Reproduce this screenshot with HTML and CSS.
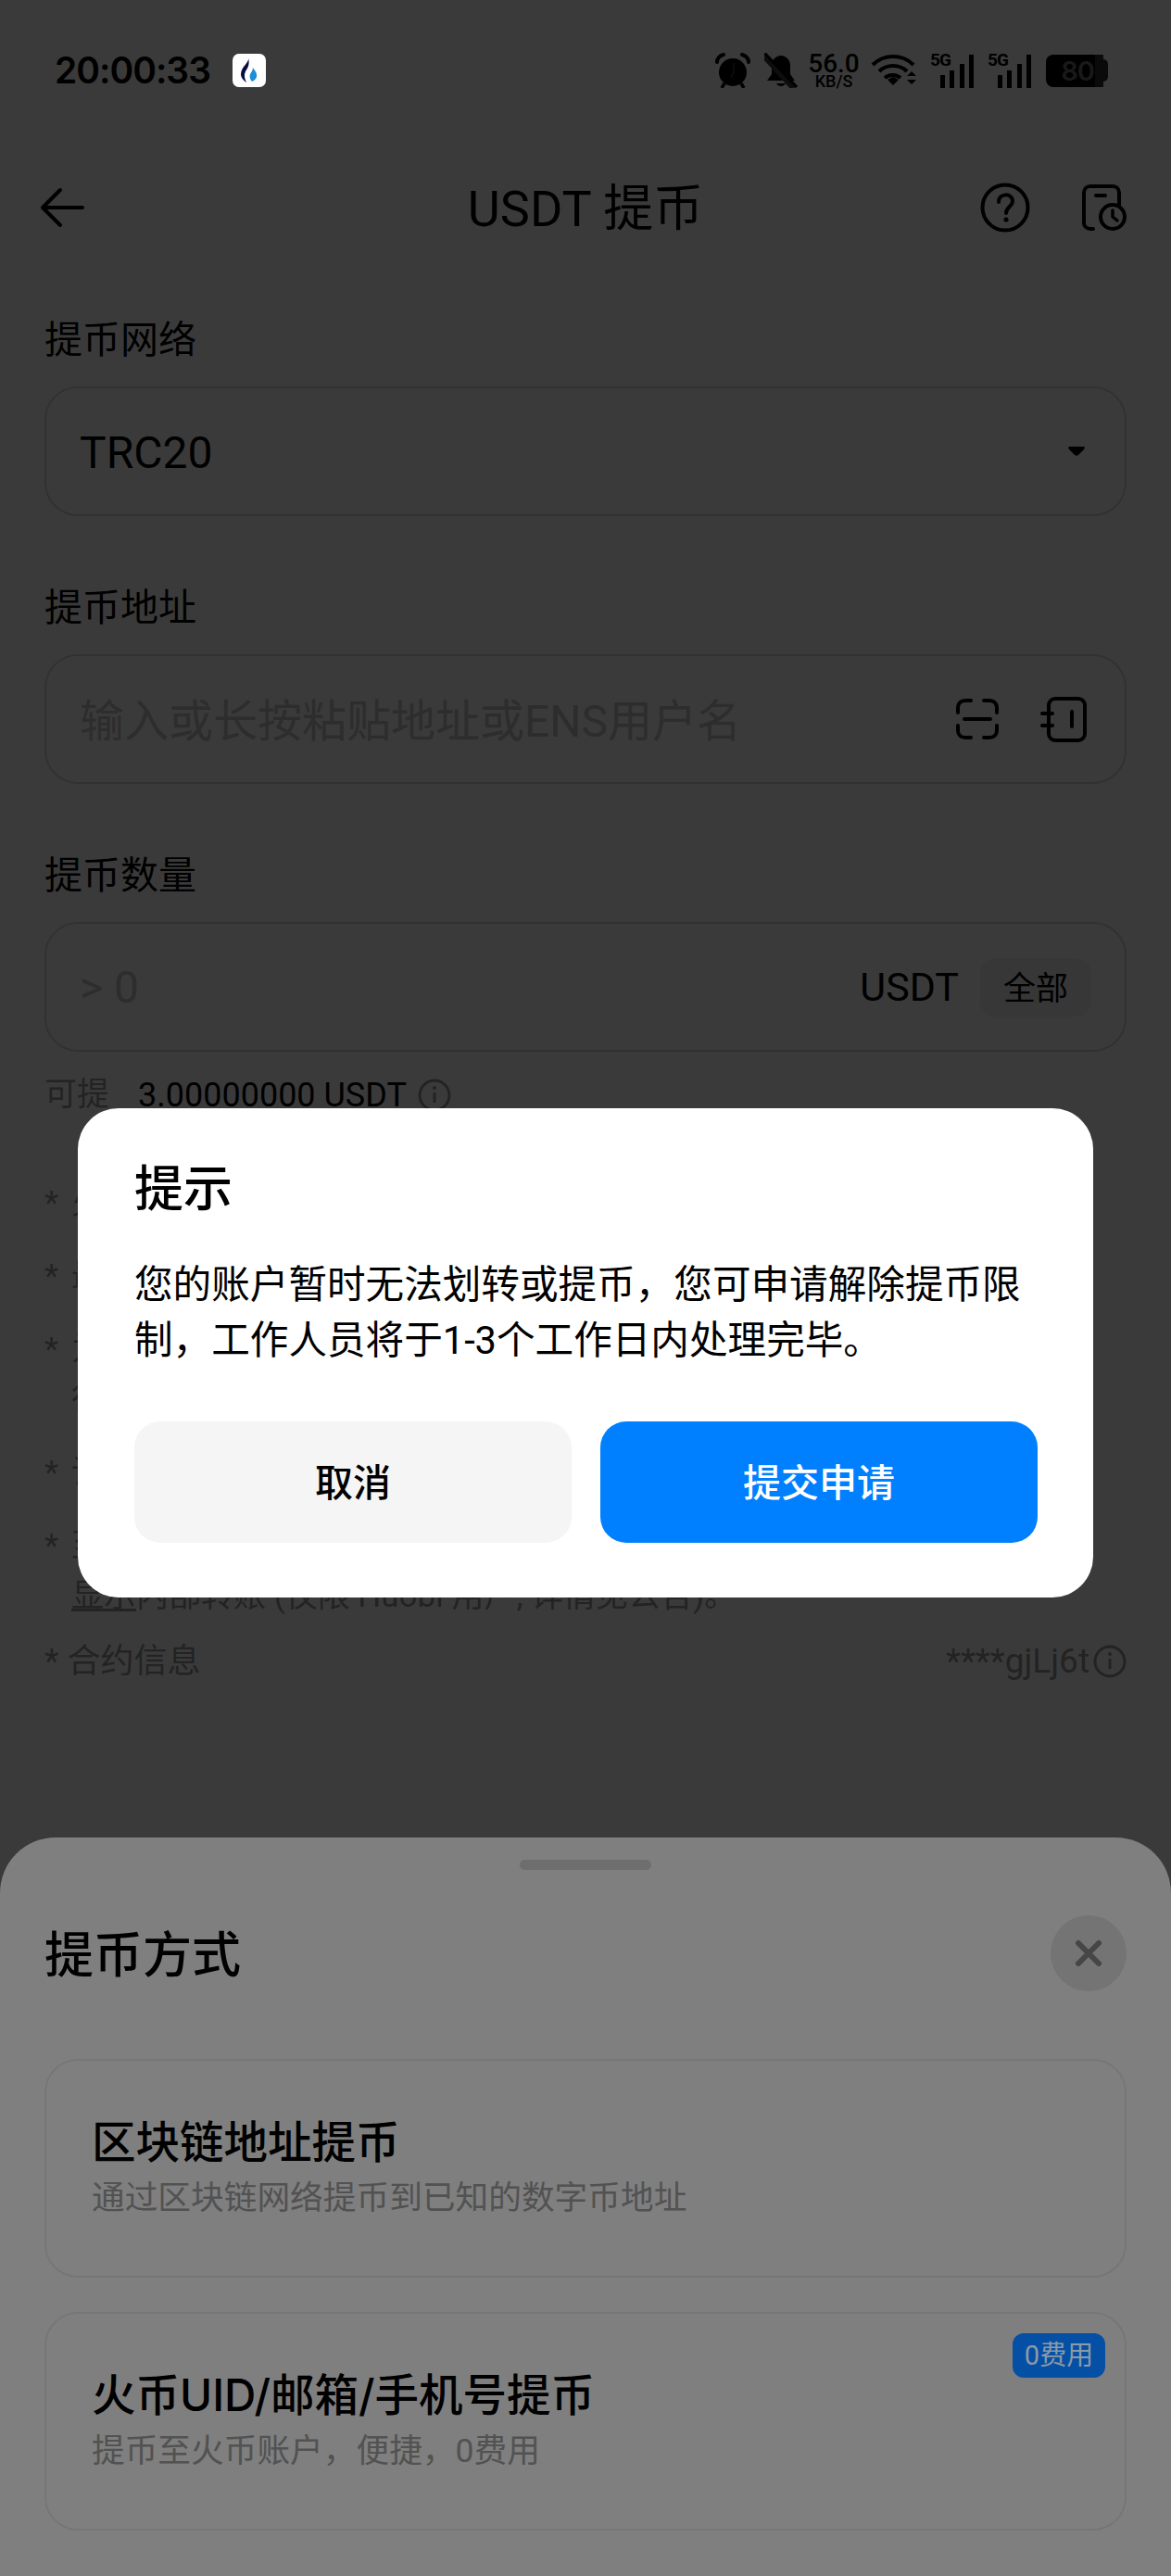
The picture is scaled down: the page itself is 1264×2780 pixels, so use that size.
FILE: index.html
```html
<!DOCTYPE html>
<html lang="zh">
<head>
  <meta charset="UTF-8">
  <meta name="viewport" content="width=device-width, initial-scale=1.0">
  <title>USDT 提币</title>
  <link rel="stylesheet" href="styles.css">
</head>
<body>

  <!-- 底层页面 -->
  <div class="page">
    <div class="status-bar">
      <div class="status-left">
        <span class="clock">20:00:33</span>
        <span class="app-badge">
          <svg width="24" height="30" viewBox="0 0 24 30">
            <path d="M11 1c2 5-8 10-8 18 0 4 3 7 6 9-2-4-3-8-1-12 2-3 5-7 3-15z" fill="#0b0b45"/>
            <path d="M16 12c2 3 5 6 4 10-1 3-3 4-5 5-2-2-3-5-2-8 1-2 3-4 3-7z" fill="#1c8fd6"/>
          </svg>
        </span>
      </div>
      <div class="status-right">
        <svg class="ic-alarm" width="38" height="38" viewBox="0 0 38 38">
          <circle cx="19" cy="21" r="15" fill="#000"/>
          <path d="M2 10c0-4 3-7 7-8M36 10c0-4-3-7-7-8" fill="none" stroke="#000" stroke-width="4" stroke-linecap="round"/>
          <path d="M10 33l-3 5M28 33l3 5" stroke="#000" stroke-width="3.5"/>
          <path d="M20 11v10l-3 6" stroke="#3b3b3b" stroke-width="1.6" fill="none"/>
        </svg>
        <svg class="ic-bell" width="36" height="38" viewBox="0 0 36 38">
          <path d="M18 3c6 0 10 5 10 11v9l5 7H3l5-7v-9C8 8 12 3 18 3z" fill="#000"/>
          <path d="M13 33c2 4 8 4 10 0z" fill="#000"/>
          <path d="M-2 1l34 37" stroke="#3b3b3b" stroke-width="7"/>
          <path d="M1 1l34 36" stroke="#000" stroke-width="3"/>
        </svg>
        <span class="net-speed"><b>56.0</b><i>KB/S</i></span>
        <svg class="ic-wifi" width="50" height="38" viewBox="0 0 50 38">
          <path d="M2 13c12-12 32-12 44 0M9 20c8-8 22-8 30 0M15 27c5-4 12-4 17 0" fill="none" stroke="#000" stroke-width="4"/>
          <path d="M18 29l6-3 6 3-6 6z" fill="#000"/>
          <path d="M39 25l5-5 5 5zM39 29l5 5 5-5z" fill="#000"/>
        </svg>
        <span class="signal"><em>5G</em><i class="b1"></i><i class="b2"></i><i class="b3"></i><i class="b4"></i></span>
        <span class="signal"><em>5G</em><i class="b1"></i><i class="b2"></i><i class="b3"></i><i class="b4"></i></span>
        <span class="battery"><span class="battery-fill">80</span><span class="battery-rest"></span><span class="battery-nub"></span></span>
      </div>
    </div>

    <div class="nav">
      <svg width="50" height="44" viewBox="0 0 50 44">
        <path d="M47 22H4M23 3L4 22l19 19" fill="none" stroke="#000" stroke-width="4" stroke-linecap="round" stroke-linejoin="round"/>
      </svg>
      <h1>USDT 提币</h1>
      <div class="nav-actions">
        <svg width="54" height="54" viewBox="0 0 54 54">
          <circle cx="27" cy="27" r="24.5" fill="none" stroke="#000" stroke-width="4"/>
          <path d="M20 21c0-10 15-10 15-1 0 6-7 6-7 13" fill="none" stroke="#000" stroke-width="4" stroke-linecap="round"/>
          <circle cx="28" cy="40" r="2.6" fill="#000"/>
        </svg>
        <svg width="48" height="50" viewBox="0 0 48 50">
          <path d="M12 48H9c-4 0-7-3-7-6V9c0-4 3-7 7-7h24c4 0 7 3 7 7v13" fill="none" stroke="#000" stroke-width="4" stroke-linecap="round"/>
          <path d="M15 12h10" stroke="#000" stroke-width="4" stroke-linecap="round"/>
          <circle cx="33" cy="35" r="13" fill="none" stroke="#000" stroke-width="4"/>
          <path d="M33 28v7l5 4" fill="none" stroke="#000" stroke-width="3.5" stroke-linecap="round"/>
        </svg>
      </div>
    </div>

    <form class="form">
      <label>提币网络</label>
      <div class="field">
        <span class="value">TRC20</span>
        <svg class="caret" width="20" height="14" viewBox="0 0 20 14"><path d="M2 2h16c1 0 1 2 0 3l-6 6c-1 1-3 1-4 0L2 5C1 4 1 2 2 2z" fill="#000"/></svg>
      </div>

      <label>提币地址</label>
      <div class="field">
        <span class="placeholder addr">输入或长按粘贴地址或ENS用户名</span>
        <div class="field-icons">
          <svg width="46" height="44" viewBox="0 0 46 44">
            <path d="M2 15v-5c0-5 3-8 8-8h6M30 2h6c5 0 8 3 8 8v5M2 29v5c0 5 3 8 8 8h6M30 42h6c5 0 8-3 8-8v-5M9 22h28" fill="none" stroke="#000" stroke-width="4" stroke-linecap="round"/>
          </svg>
          <svg width="50" height="50" viewBox="0 0 50 50">
            <rect x="9" y="3" width="39" height="45" rx="7" fill="none" stroke="#000" stroke-width="4"/>
            <path d="M2 19h11M2 32h11M34 17v16" stroke="#000" stroke-width="4" stroke-linecap="round"/>
          </svg>
        </div>
      </div>

      <label>提币数量</label>
      <div class="field">
        <span class="placeholder">&gt; 0</span>
        <div class="field-end">
          <span class="unit">USDT</span>
          <span class="all-btn">全部</span>
        </div>
      </div>
    </form>

    <div class="available">
      <span class="available-label">可提</span>
      <span class="available-num">3.00000000 USDT</span>
      <svg width="36" height="36" viewBox="0 0 36 36"><circle cx="18" cy="18" r="16" fill="none" stroke="#999" stroke-width="3"/><path d="M18 15v11" stroke="#999" stroke-width="3"/><circle cx="18" cy="10" r="2" fill="#999"/></svg>
    </div>

    <ul class="notes">
      <li><span>*</span><div>火币不支持</div></li>
      <li><span>*</span><div>最小提币数量</div></li>
      <li><span>*</span><div>为保障资金安全，当您账户安全策略变更时<br>行人工审核</div></li>
      <li><span>*</span><div>请务必核对提币地址</div></li>
      <li><span>*</span><div>至平台内地址不收取手续费<br><u>显示</u>内部转账 (仅限 Huobi 用户, 详情见公告)。</div></li>
    </ul>
    <div class="contract">
      <span>* 合约信息</span>
      <span class="contract-val">****gjLj6t
        <svg width="36" height="36" viewBox="0 0 36 36"><circle cx="18" cy="18" r="16" fill="none" stroke="#999" stroke-width="3"/><path d="M18 15v11" stroke="#999" stroke-width="3"/><circle cx="18" cy="10" r="2" fill="#999"/></svg>
      </span>
    </div>
  </div>

  <div class="scrim scrim-page"></div>

  <!-- 底部弹层 -->
  <div class="sheet">
    <div class="handle"></div>
    <div class="sheet-head">
      <h2>提币方式</h2>
      <span class="close">
        <svg width="30" height="30" viewBox="0 0 30 30"><path d="M4 4l22 22M26 4L4 26" stroke="#8c8c8c" stroke-width="6" stroke-linecap="round"/></svg>
      </span>
    </div>
    <div class="method">
      <h3>区块链地址提币</h3>
      <p>通过区块链网络提币到已知的数字币地址</p>
    </div>
    <div class="method">
      <span class="tag">0费用</span>
      <h3>火币UID/邮箱/手机号提币</h3>
      <p>提币至火币账户，便捷，0费用</p>
    </div>
  </div>

  <div class="scrim scrim-sheet"></div>

  <!-- 提示弹窗 -->
  <div class="dialog">
    <h2>提示</h2>
    <p>您的账户暂时无法划转或提币，您可申请解除提币限制，工作人员将于1-3个工作日内处理完毕。</p>
    <div class="dialog-btns">
      <button type="button" class="btn btn-cancel">取消</button>
      <button type="button" class="btn btn-ok">提交申请</button>
    </div>
  </div>

</body>
</html>
```
FILE: styles.css
```css
* {
  box-sizing: border-box;
}

html, body {
  margin: 0;
  padding: 0;
}

body {
  position: relative;
  width: 1264px;
  height: 2780px;
  overflow: hidden;
  background: #fff;
  color: #000;
  font-family: "Roboto", "Noto Sans CJK SC", sans-serif;
}

/* 底层页面 */
.page {
  padding: 0 48px;
}

.status-bar {
  height: 152px;
  margin: 0 -48px;
  padding: 57px 68px 0 59px;
  display: flex;
  justify-content: space-between;
  align-items: flex-start;
}

.status-left {
  display: flex;
  align-items: center;
  gap: 24px;
}

.clock {
  font-family: "Inter", sans-serif;
  font-size: 39px;
  font-weight: 600;
  line-height: 38px;
  letter-spacing: -1px;
}

/* 系统状态栏的图标不受遮罩影响 */
.app-badge {
  position: relative;
  z-index: 5;
  width: 36px;
  height: 36px;
  border-radius: 7px;
  background: #fff;
  display: flex;
  align-items: center;
  justify-content: center;
}

.status-right {
  display: flex;
  align-items: center;
  height: 38px;
}

.ic-bell { margin-left: 15px; }
.net-speed { margin-left: 10px; }
.ic-wifi { margin-left: 11px; }
.signal { margin-left: 14px; }
.signal + .signal { margin-left: 15px; }
.battery { margin-left: 16px; }

.net-speed {
  display: flex;
  flex-direction: column;
  align-items: center;
  width: 58px;
  font-weight: 500;
}

.net-speed b {
  font-size: 28px;
  line-height: 23px;
  font-weight: 500;
}

.net-speed i {
  font-style: normal;
  font-size: 18px;
  line-height: 15px;
}

.signal {
  position: relative;
  width: 47px;
  height: 38px;
  display: flex;
  align-items: flex-end;
  justify-content: flex-end;
  gap: 5.5px;
}

.signal em {
  position: absolute;
  left: 0;
  top: -1px;
  font-style: normal;
  font-size: 19px;
  line-height: 18px;
  font-weight: 700;
  letter-spacing: -1px;
}

.signal i {
  width: 5px;
  background: #000;
}

.signal .b1 { height: 14px; }
.signal .b2 { height: 19px; }
.signal .b3 { height: 26px; }
.signal .b4 { height: 36px; }

.battery {
  display: flex;
  align-items: center;
}

.battery-fill {
  width: 53px;
  height: 35px;
  border-radius: 8px 0 0 8px;
  background: #000;
  color: #6e6e6e;
  font-family: "Inter", sans-serif;
  font-size: 29px;
  font-weight: 600;
  line-height: 35px;
  text-align: right;
  padding-right: 1px;
  letter-spacing: -1px;
}

.battery-rest {
  width: 9px;
  height: 35px;
  background: #2c2c2c;
}

.battery-nub {
  width: 5px;
  height: 24px;
  border-radius: 0 6px 6px 0;
  background: #2c2c2c;
}

.nav {
  position: relative;
  height: 144px;
  display: flex;
  align-items: center;
  justify-content: space-between;
  margin: 0 0 0 -6px;
}

.nav h1 {
  position: absolute;
  left: 0;
  right: -6px;
  text-align: center;
  margin: 0 0 8px;
  font-size: 54px;
  font-weight: 400;
}

.nav-actions {
  display: flex;
  gap: 56px;
  align-items: center;
}

.form {
  padding-top: 41px;
}

label {
  display: block;
  font-size: 41px;
  line-height: 60px;
  height: 60px;
  margin-bottom: 20px;
}

.field {
  height: 140px;
  border: 2px solid #d8d8d8;
  border-radius: 36px;
  padding: 0 36px;
  margin-bottom: 69px;
  display: flex;
  align-items: center;
  justify-content: space-between;
}

.field:last-child {
  margin-bottom: 0;
}

.value {
  font-size: 48px;
  margin-top: 2px;
}

.caret {
  margin-right: 6px;
}

.placeholder {
  font-size: 48px;
  color: #c4c4c4;
}

.addr {
  margin-bottom: 4px;
}

.field-icons {
  display: flex;
  gap: 45px;
  align-items: center;
  margin-right: 5px;
}

.field-end {
  display: flex;
  align-items: center;
  gap: 23px;
}

.unit {
  font-size: 43px;
}

.all-btn {
  background: #f0f0f0;
  border-radius: 16px;
  font-size: 35px;
  padding: 4px 25px 8px;
}

.available {
  margin-top: 21px;
  display: flex;
  align-items: center;
  font-size: 36px;
  line-height: 52px;
}

.available-label {
  font-size: 35px;
  color: #999;
}

.available-num {
  margin: 0 12px 0 31px;
}

.notes {
  list-style: none;
  margin: 64px 0 0;
  padding: 0;
  font-size: 35px;
  line-height: 54px;
  color: #999;
}

.notes li {
  display: flex;
  margin-bottom: 25px;
}

.notes li:last-child {
  margin-bottom: 0;
}

.notes li span {
  width: 29px;
  flex: none;
}

.contract {
  margin-top: 16px;
  display: flex;
  justify-content: space-between;
  align-items: center;
  font-size: 36px;
  line-height: 54px;
  color: #999;
}

.contract-val {
  display: flex;
  align-items: center;
  gap: 4px;
  font-size: 37px;
}

/* 遮罩 */
.scrim {
  position: absolute;
  inset: 0;
}

.scrim-page {
  background: rgba(0, 0, 0, 0.54);
}

.scrim-sheet {
  background: rgba(0, 0, 0, 0.5);
}

/* 底部弹层 */
.sheet {
  position: absolute;
  left: 0;
  right: 0;
  top: 1983px;
  bottom: 0;
  background: #fff;
  border-radius: 60px 60px 0 0;
  padding: 24px 48px 0;
}

.handle {
  width: 142px;
  height: 11px;
  border-radius: 6px;
  background: #dcdcdc;
  margin: 0 auto;
}

.sheet-head {
  height: 82px;
  margin-top: 49px;
  display: flex;
  align-items: center;
  justify-content: space-between;
}

.sheet-head h2 {
  margin: 0 0 4px;
  font-size: 53px;
  font-weight: 500;
}

.close {
  width: 82px;
  height: 82px;
  border-radius: 50%;
  background: #e8e8e8;
  display: flex;
  align-items: center;
  justify-content: center;
}

.method {
  position: relative;
  height: 236px;
  margin-top: 37px;
  border: 2px solid #ececec;
  border-radius: 36px;
  padding: 56px 49px 0;
}

.sheet-head + .method {
  margin-top: 73px;
}

.method h3 {
  margin: 0;
  font-family: "Inter", "Noto Sans CJK SC", sans-serif;
  font-size: 47.5px;
  font-weight: 500;
  line-height: 64px;
}

.method p {
  margin: 2px 0 0;
  font-size: 35.7px;
  line-height: 52px;
  color: #a4a4a4;
}

.tag {
  position: absolute;
  z-index: 5;
  top: 21px;
  right: 21px;
  width: 100px;
  height: 48px;
  border-radius: 12px;
  background: #0550a5;
  color: #8d9aa8;
  font-size: 29px;
  line-height: 48px;
  text-align: center;
}

/* 提示弹窗 */
.dialog {
  position: absolute;
  left: 84px;
  top: 1196px;
  width: 1096px;
  height: 528px;
  background: #fff;
  border-radius: 44px;
  padding: 53px 60px 0 61px;
}

.dialog h2 {
  margin: 0;
  font-size: 53px;
  font-weight: 500;
  line-height: 70px;
}

.dialog p {
  margin: 38px 0 0;
  font-size: 41.6px;
  line-height: 60px;
}

.dialog-btns {
  margin-top: 57px;
  display: flex;
  gap: 31px;
}

.btn {
  flex: 1;
  height: 131px;
  border: none;
  border-radius: 28px;
  padding: 0 0 6px;
  font-family: inherit;
  font-size: 41px;
  font-weight: 500;
}

.btn-cancel {
  background: #f5f5f5;
  color: #000;
}

.btn-ok {
  background: #0080ff;
  color: #fff;
}
```
